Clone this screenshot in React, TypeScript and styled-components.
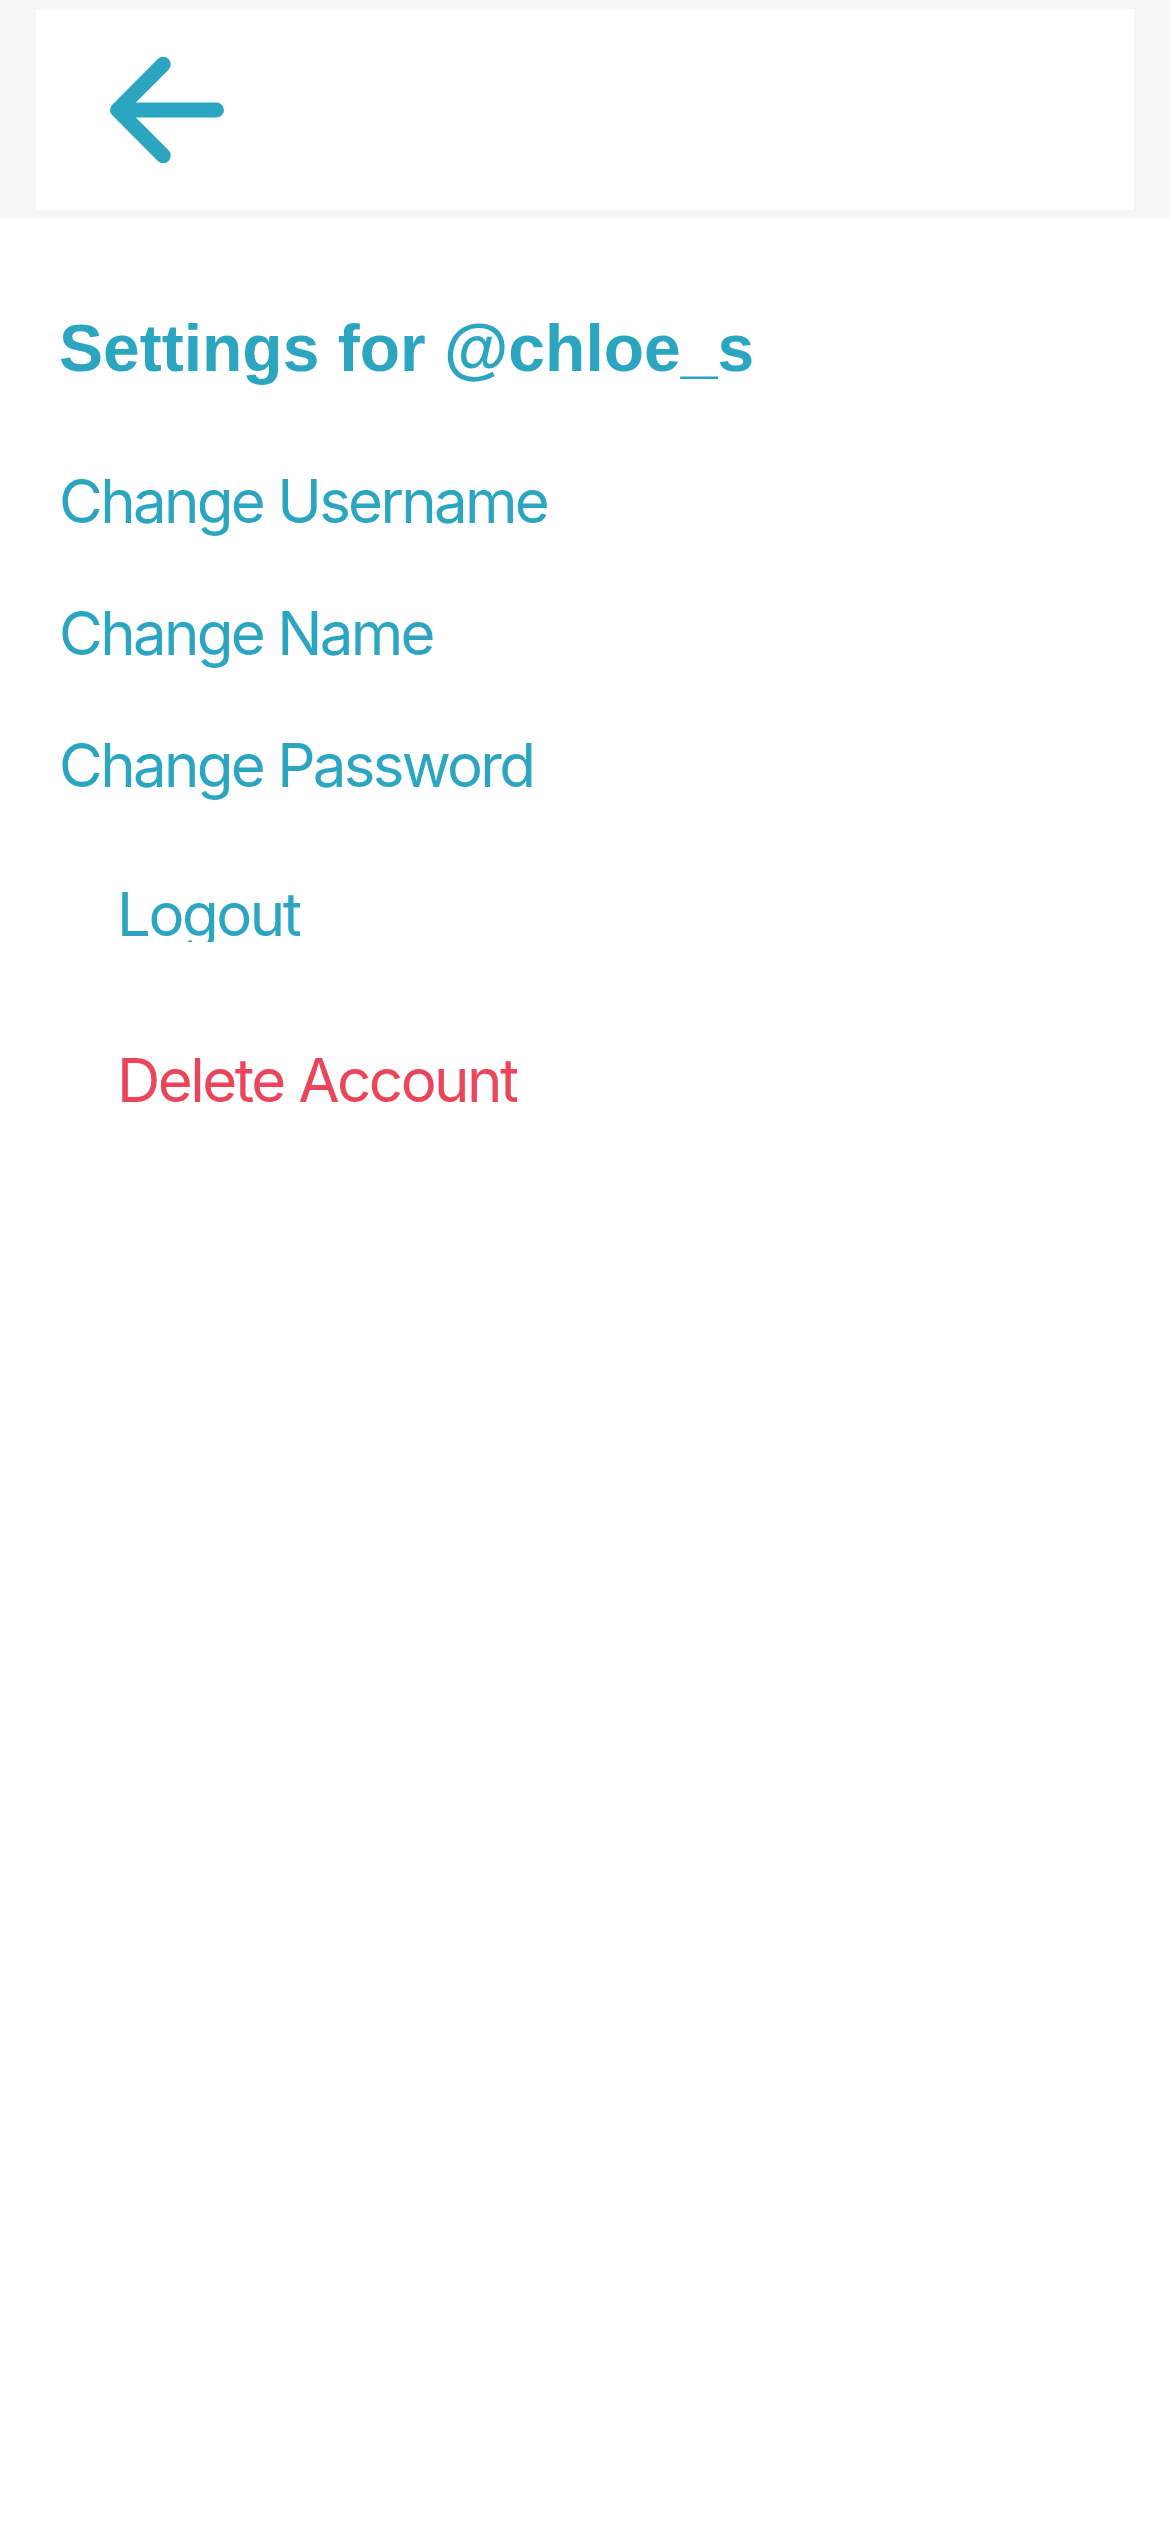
import React from 'react';
import styled, { createGlobalStyle } from 'styled-components';

const GlobalStyle = createGlobalStyle`
  html, body {
    margin: 0;
    padding: 0;
    background: #ffffff;
  }
  body {
    font-family: Inter, "Noto Sans", "Liberation Sans", sans-serif;
  }
  * {
    box-sizing: border-box;
  }
`;

const TEAL = '#2ca6c0';
const RED = '#ea455b';

const Screen = styled.div`
  min-height: 2532px;
  width: 1170px;
  background: #ffffff;
  display: flex;
  flex-direction: column;
`;

const HeaderBar = styled.header`
  background: #f6f6f6;
  padding: 9px 36px 8px;
`;

const HeaderInner = styled.div`
  background: #ffffff;
  height: 201px;
  display: flex;
  align-items: center;
  padding-left: 50px;
`;

const BackButton = styled.button`
  border: none;
  background: transparent;
  padding: 0;
  margin: 0;
  width: 162px;
  height: 162px;
  display: flex;
  align-items: center;
  justify-content: center;
  cursor: pointer;
  color: ${TEAL};

  svg {
    width: 162px;
    height: 162px;
    display: block;
  }
`;

const Content = styled.main`
  display: flex;
  flex-direction: column;
  align-items: flex-start;
  padding: 97px 59px 0;
`;

const Title = styled.h1`
  margin: 0 0 84px;
  font-family: "Liberation Sans", Arial, sans-serif;
  font-weight: 700;
  font-size: 66px;
  line-height: 66px;
  color: ${TEAL};
  white-space: nowrap;
`;

const LinkList = styled.nav`
  display: flex;
  flex-direction: column;
  gap: 60px;
`;

const SettingLink = styled.a`
  display: block;
  font-size: 60px;
  line-height: 72px;
  letter-spacing: -2.7px;
  color: ${TEAL};
  text-decoration: none;
  cursor: pointer;
`;

const Actions = styled.div`
  display: flex;
  flex-direction: column;
  align-items: flex-start;
  gap: 102px;
  margin-top: 77px;
  padding-left: 58px;
`;

/* the logout label sits in a box that cuts off its descender */
const ActionButton = styled.button<{ $danger?: boolean; $clip?: boolean }>`
  border: none;
  background: transparent;
  padding: 0;
  margin: 0;
  height: ${p => (p.$clip ? '64px' : '72px')};
  overflow: hidden;
  text-align: left;
  font-family: Inter, "Noto Sans", sans-serif;
  font-size: 60px;
  line-height: 72px;
  letter-spacing: -2.5px;
  color: ${p => (p.$danger ? RED : TEAL)};
  cursor: pointer;
`;

const BackArrow = () => (
  <svg viewBox="0 0 512 512" fill="none" stroke="currentColor" strokeLinecap="round" strokeLinejoin="round" strokeWidth={48}>
    <path d="M244 400L100 256l144-144M120 256h292" />
  </svg>
);

const settings = ['Change Username', 'Change Name', 'Change Password'];

export default function App() {
  return (
    <>
      <GlobalStyle />
      <Screen>
        <HeaderBar>
          <HeaderInner>
            <BackButton aria-label="Back">
              <BackArrow />
            </BackButton>
          </HeaderInner>
        </HeaderBar>

        <Content>
          <Title>Settings for @chloe_s</Title>

          <LinkList>
            {settings.map(s => (
              <SettingLink key={s}>{s}</SettingLink>
            ))}
          </LinkList>

          <Actions>
            <ActionButton $clip>Logout</ActionButton>
            <ActionButton $danger>Delete Account</ActionButton>
          </Actions>
        </Content>
      </Screen>
    </>
  );
}
